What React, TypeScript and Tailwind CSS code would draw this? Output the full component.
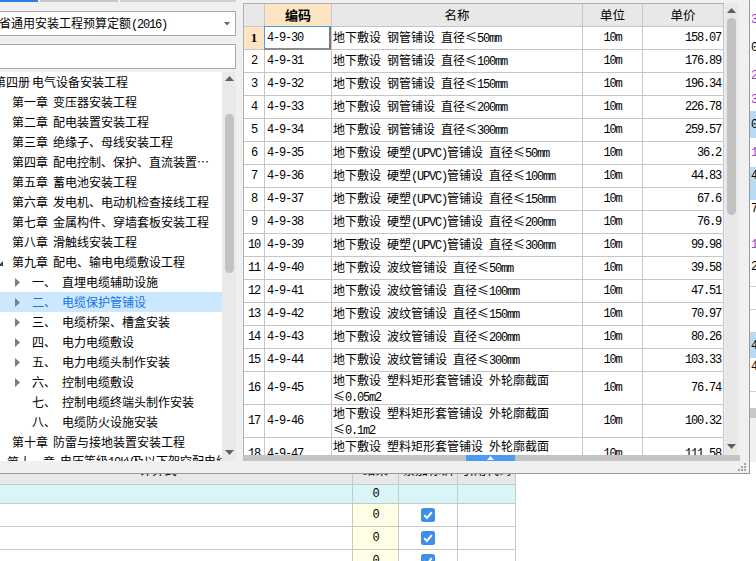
import React from 'react';

const MONO = "font-['Liberation_Mono',monospace] text-[12px] tracking-[-1.2px]";
const GL = 'border-[#c6c6c6]';

function Mix({ t }: { t: string }) {
  const parts = t.split(/([\x20-\x7E]+)/).filter((p) => p !== '');
  return (
    <>
      {parts.map((p, i) =>
        /^[\x20-\x7E]+$/.test(p) ? (
          <span key={i} className={MONO + ' whitespace-pre'}>
            {p}
          </span>
        ) : (
          <span key={i}>{p}</span>
        )
      )}
    </>
  );
}

type TNode = { k: 'book' | 'ch' | 'sub'; a: string; b: string; tri?: boolean; sel?: boolean; exp?: boolean };
const tree: TNode[] = [
  { k: 'book', a: '第四册', b: '电气设备安装工程' },
  { k: 'ch', a: '第一章', b: '变压器安装工程' },
  { k: 'ch', a: '第二章', b: '配电装置安装工程' },
  { k: 'ch', a: '第三章', b: '绝缘子、母线安装工程' },
  { k: 'ch', a: '第四章', b: '配电控制、保护、直流装置…' },
  { k: 'ch', a: '第五章', b: '蓄电池安装工程' },
  { k: 'ch', a: '第六章', b: '发电机、电动机检查接线工程' },
  { k: 'ch', a: '第七章', b: '金属构件、穿墙套板安装工程' },
  { k: 'ch', a: '第八章', b: '滑触线安装工程' },
  { k: 'ch', a: '第九章', b: '配电、输电电缆敷设工程', exp: true },
  { k: 'sub', a: '一、', b: '直埋电缆辅助设施', tri: true },
  { k: 'sub', a: '二、', b: '电缆保护管铺设', tri: true, sel: true },
  { k: 'sub', a: '三、', b: '电缆桥架、槽盒安装', tri: true },
  { k: 'sub', a: '四、', b: '电力电缆敷设', tri: true },
  { k: 'sub', a: '五、', b: '电力电缆头制作安装', tri: true },
  { k: 'sub', a: '六、', b: '控制电缆敷设', tri: true },
  { k: 'sub', a: '七、', b: '控制电缆终端头制作安装' },
  { k: 'sub', a: '八、', b: '电缆防火设施安装' },
  { k: 'ch', a: '第十章', b: '防雷与接地装置安装工程' },
  { k: 'ch', a: '第十一章', b: '电压等级10kV及以下架空配电线路工程' },
];

type Row = [string, string | [string, string], string];
const data: Row[] = [
  ['4-9-30', '地下敷设 钢管铺设 直径≤50mm', '158.07'],
  ['4-9-31', '地下敷设 钢管铺设 直径≤100mm', '176.89'],
  ['4-9-32', '地下敷设 钢管铺设 直径≤150mm', '196.34'],
  ['4-9-33', '地下敷设 钢管铺设 直径≤200mm', '226.78'],
  ['4-9-34', '地下敷设 钢管铺设 直径≤300mm', '259.57'],
  ['4-9-35', '地下敷设 硬塑(UPVC)管铺设 直径≤50mm', '36.2'],
  ['4-9-36', '地下敷设 硬塑(UPVC)管铺设 直径≤100mm', '44.83'],
  ['4-9-37', '地下敷设 硬塑(UPVC)管铺设 直径≤150mm', '67.6'],
  ['4-9-38', '地下敷设 硬塑(UPVC)管铺设 直径≤200mm', '76.9'],
  ['4-9-39', '地下敷设 硬塑(UPVC)管铺设 直径≤300mm', '99.98'],
  ['4-9-40', '地下敷设 波纹管铺设 直径≤50mm', '39.58'],
  ['4-9-41', '地下敷设 波纹管铺设 直径≤100mm', '47.51'],
  ['4-9-42', '地下敷设 波纹管铺设 直径≤150mm', '70.97'],
  ['4-9-43', '地下敷设 波纹管铺设 直径≤200mm', '80.26'],
  ['4-9-44', '地下敷设 波纹管铺设 直径≤300mm', '103.33'],
  ['4-9-45', ['地下敷设 塑料矩形套管铺设 外轮廓截面', '≤0.05m2'], '76.74'],
  ['4-9-46', ['地下敷设 塑料矩形套管铺设 外轮廓截面', '≤0.1m2'], '100.32'],
  ['4-9-47', ['地下敷设 塑料矩形套管铺设 外轮廓截面', '≤0.2m2'], '111.58'],
];

function UpArrow({ className = '' }: { className?: string }) {
  return (
    <svg className={className} width="9" height="5" viewBox="0 0 9 5">
      <polygon points="0,5 4.5,0 9,5" fill="#5f5f5f" />
    </svg>
  );
}
function DownArrow({ className = '' }: { className?: string }) {
  return (
    <svg className={className} width="9" height="5" viewBox="0 0 9 5">
      <polygon points="0,0 9,0 4.5,5" fill="#5f5f5f" />
    </svg>
  );
}

function Tree() {
  return (
    <div className="w-[222px] bg-white overflow-hidden text-[12px]">
      {tree.map((n, i) => (
        <div
          key={i}
          className={
            'h-[20px] flex items-center whitespace-nowrap ' + (n.sel ? 'bg-[#cce8ff] text-[#1673e6]' : 'text-black')
          }
        >
          {n.k === 'book' && (
            <>
              <span className="ml-[-6px]">{n.a}</span>
              <span className="ml-[2px]">{n.b}</span>
            </>
          )}
          {n.k === 'ch' && (
            <>
              {n.exp ? (
                <svg className="ml-[-2px] mt-[2px]" width="5" height="5" viewBox="0 0 5 5">
                  <polygon points="5,0 5,5 0,5" fill="#404040" />
                </svg>
              ) : (
                <span className="ml-[-2px] w-[5px]" />
              )}
              <span className="ml-[9px]">{n.a}</span>
              <span className="ml-[5px]">
                <Mix t={n.b} />
              </span>
            </>
          )}
          {n.k === 'sub' && (
            <>
              <span className="ml-[15px] w-[5px] flex items-center">
                {n.tri && (
                  <svg width="5" height="9" viewBox="0 0 5 9">
                    <polygon points="0,0 5,4.5 0,9" fill="#7d7d7d" />
                  </svg>
                )}
              </span>
              <span className="ml-[12px] w-[30px]">{n.a}</span>
              <span>{n.b}</span>
            </>
          )}
        </div>
      ))}
    </div>
  );
}

function LeftPanel() {
  return (
    <div className="w-[236px] flex flex-col">
      <div className="h-[2px] flex">
        <div className="w-[38px] bg-[#2b7de0]" />
        <div className="ml-[2px] w-[78px] bg-[#c8c8c8]" />
        <div className="ml-[2px] w-[116px] bg-[#d0d0d0]" />
      </div>
      <div className="mt-[9px] h-[25px] bg-white border border-l-0 border-[#a8a8a8] flex items-center overflow-hidden text-[12px]">
        <span className="ml-[-1px] whitespace-nowrap">
          <Mix t="省通用安装工程预算定额(2016)" />
        </span>
        <div className="flex-1" />
        <svg className="mr-[5px]" width="6" height="4" viewBox="0 0 6 4">
          <polygon points="0,0 6,0 3,3.5" fill="#6a6a6a" />
        </svg>
      </div>
      <div className="mt-[8px] h-[25px] bg-white border border-l-0 border-[#a8a8a8]" />
      <div className="mt-[3px] flex-1 flex overflow-hidden">
        <Tree />
        <div className="w-[14px] bg-[#e9e9e9] flex flex-col items-center">
          <UpArrow className="mt-[4px]" />
          <div className="mt-[33px] w-[9px] h-[159px] rounded-full bg-[#c3c3c3]" />
          <div className="flex-1" />
          <DownArrow className="mb-[6px]" />
        </div>
      </div>
    </div>
  );
}

function Grid() {
  return (
    <div className="w-[481px] h-full border-l border-t border-[#b0b0b0] bg-white overflow-hidden">
      <div className={'flex h-[23px] border-b bg-[#e8e8e8] text-[12.5px] ' + GL}>
        <div className={'w-[21px] border-r ' + GL} />
        <div className={'w-[67px] border-r bg-[#fde5c4] font-bold text-[13px] flex items-center justify-center ' + GL}>编码</div>
        <div className={'w-[251px] border-r flex items-center justify-center ' + GL}>名称</div>
        <div className={'w-[60px] border-r flex items-center justify-center ' + GL}>单位</div>
        <div className={'w-[81px] border-r flex items-center justify-center ' + GL}>单价</div>
      </div>
      {data.map((r, i) => {
        const two = Array.isArray(r[1]);
        return (
          <div key={i} className={'flex border-b text-[12px] ' + GL + (two ? ' h-[33px]' : ' h-[23px]')}>
            <div
              className={
                'w-[21px] border-r flex items-center justify-center ' +
                GL +
                (i === 0 ? ' bg-[#fde5c4]' : '')
              }
            >
              {i === 0 ? (
                <span className="font-['Liberation_Serif',serif] font-bold text-[13px]">1</span>
              ) : (
                <span className={MONO}>{i + 1}</span>
              )}
            </div>
            <div className={'w-[67px] border-r flex items-center pl-[2px] relative ' + GL}>
              <span className={MONO}>{r[0]}</span>
              {i === 0 && (
                <div className="absolute left-[-1px] top-[-1px] w-[67px] h-[24px] border-t border-l border-t-[#4a9be8] border-l-[#4a9be8] border-r-2 border-b-2 border-r-[#7c7c7c] border-b-[#8c8c8c]" />
              )}
            </div>
            <div
              className={
                'w-[251px] border-r pl-[1px] overflow-hidden whitespace-nowrap ' +
                GL +
                (two ? ' flex flex-col pt-[1px] leading-[14px]' : ' flex items-center')
              }
            >
              {two ? (
                <>
                  <div>
                    <Mix t={(r[1] as [string, string])[0]} />
                  </div>
                  <div>
                    <Mix t={(r[1] as [string, string])[1]} />
                  </div>
                </>
              ) : (
                <span>
                  <Mix t={r[1] as string} />
                </span>
              )}
            </div>
            <div className={'w-[60px] border-r flex items-center justify-center ' + GL}>
              <span className={MONO}>10m</span>
            </div>
            <div className={'w-[81px] border-r flex items-center justify-end pr-[2px] ' + GL}>
              <span className={MONO}>{r[2]}</span>
            </div>
          </div>
        );
      })}
    </div>
  );
}

function RightPanel() {
  return (
    <div className="w-[506px] flex flex-col">
      <div className="h-[3px]" />
      <div className="h-[452px] flex">
        <Grid />
        <div className="ml-[1px] w-[13px] h-full bg-[#e8e8e8] flex flex-col items-center">
          <UpArrow className="mt-[5px]" />
          <div className="mt-[5px] w-[9px] h-[197px] rounded-full bg-[#c2c2c2]" />
          <div className="flex-1" />
          <DownArrow className="mb-[6px]" />
        </div>
      </div>
      <div className="h-[6px] w-[497px] bg-[#c4c4c4] flex">
        <div className="ml-[223px] w-[49px] bg-[#4a9bf4] flex justify-center items-start pt-[1px]">
          <svg width="7" height="4" viewBox="0 0 7 4">
            <polygon points="0,4 3.5,0 7,4" fill="#ffffff" />
          </svg>
        </div>
      </div>
    </div>
  );
}

function Popup() {
  return (
    <div className="absolute left-0 top-0 w-[750px] h-[474px] bg-[#f0f0f0] border-r border-b border-[#9a9a9a] flex flex-col">
      <div className="flex h-[461px]">
        <LeftPanel />
        <div className="w-[7px]" />
        <RightPanel />
      </div>
      <div className="flex-1 flex justify-end items-end pr-[3px] pb-[2px]">
        <svg width="9" height="9" viewBox="0 0 9 9">
          <rect x="7" y="1" width="2" height="2" fill="#a4a4a4" />
          <rect x="4" y="4" width="2" height="2" fill="#a4a4a4" />
          <rect x="7" y="4" width="2" height="2" fill="#a4a4a4" />
          <rect x="1" y="7" width="2" height="2" fill="#a4a4a4" />
          <rect x="4" y="7" width="2" height="2" fill="#a4a4a4" />
          <rect x="7" y="7" width="2" height="2" fill="#a4a4a4" />
        </svg>
      </div>
    </div>
  );
}

type S = { h: string; t?: string; p?: boolean; b?: boolean; top?: boolean; bb?: boolean; g?: string };
const strip: S[] = [
  { h: 'h-[9px]' },
  { h: 'h-[22px]', t: '3', p: true },
  { h: 'h-[33px]', t: '0' },
  { h: 'h-[24px]', t: '2', p: true },
  { h: 'h-[23px]', t: '3', p: true },
  { h: 'h-[27px]', t: '0', b: true },
  { h: 'h-[29px]', t: '1', p: true },
  { h: 'h-[33px]', t: '4', b: true, top: true },
  { h: 'h-[32px]', t: '7', top: true },
  { h: 'h-[26px]', t: '1', p: true },
  { h: 'h-[29px]', t: '2', top: true, bb: true },
  { h: 'h-[23px]', bb: true },
  { h: 'h-[23px]', bb: true },
  { h: 'h-[25px]', t: '4', b: true },
  { h: 'h-[34px]', t: '4', top: true, bb: true },
  { h: 'h-[16px]' },
  { h: 'h-[10px]', g: 'bg-[#c8c8c8]' },
  { h: 'h-[44px]', g: 'bg-[#f0f0f0]' },
];

function RightStrip() {
  return (
    <div className="w-[6px] flex flex-col overflow-hidden">
      {strip.map((s, i) => (
        <div
          key={i}
          className={
            s.h +
            ' flex pl-[1px] ' +
            (s.top ? 'items-start pt-[3px] ' : 'items-center ') +
            (s.b ? 'bg-[#b8dcf8] ' : s.g ? s.g + ' ' : 'bg-white ') +
            (s.bb ? 'border-b border-[#d0d0d0] ' : '') +
            (s.p ? 'text-[#a03cc8]' : 'text-black')
          }
        >
          {s.t && <span className={MONO + ' leading-[12px]'}>{s.t}</span>}
        </div>
      ))}
    </div>
  );
}

function Check() {
  return (
    <svg width="14" height="14" viewBox="0 0 14 14">
      <rect x="0" y="0" width="14" height="14" rx="2.5" fill="#3d8fe8" />
      <polyline points="3.2,7.2 6,10 10.8,4.2" fill="none" stroke="#ffffff" strokeWidth="2" />
    </svg>
  );
}

function BottomTable() {
  const BL = 'border-[#c8c8c8]';
  const rows = [0, 1, 2, 3];
  return (
    <div className="w-[516px] text-[12.5px]">
      <div className={'flex h-[23px] bg-[#e8e8e8] border-b ' + BL}>
        <div className={'w-[353px] border-r flex justify-center items-center pb-[6px] pr-[36px] ' + BL}>计算式</div>
        <div className={'w-[46px] border-r flex justify-center items-center pb-[6px] ' + BL}>结果</div>
        <div className={'w-[59px] border-r flex justify-center items-center pb-[6px] ' + BL}>累加标识</div>
        <div className={'w-[58px] border-r flex justify-center items-center pb-[6px] ' + BL}>引用代码</div>
      </div>
      {rows.map((r) => (
        <div
          key={r}
          className={'flex border-b ' + BL + (r === 0 ? ' h-[19px] bg-[#d8f5f7]' : ' h-[23px] bg-white')}
        >
          <div className={'w-[353px] border-r ' + BL} />
          <div
            className={
              'w-[46px] border-r flex items-center justify-center ' + BL + (r === 0 ? '' : ' bg-[#ffffe6]')
            }
          >
            <span className={MONO}>0</span>
          </div>
          <div className={'w-[59px] border-r flex items-center justify-center ' + BL}>{r > 0 && <Check />}</div>
          <div className={'w-[58px] border-r ' + BL} />
        </div>
      ))}
    </div>
  );
}

export default function App() {
  return (
    <div className="relative w-[756px] h-[561px] overflow-hidden bg-white font-['Noto_Sans_CJK_SC',sans-serif] text-[12.5px] text-black">
      <div className="flex flex-col h-full">
        <div className="h-[462px] flex">
          <div className="flex-1" />
          <RightStrip />
        </div>
        <BottomTable />
      </div>
      <Popup />
    </div>
  );
}
